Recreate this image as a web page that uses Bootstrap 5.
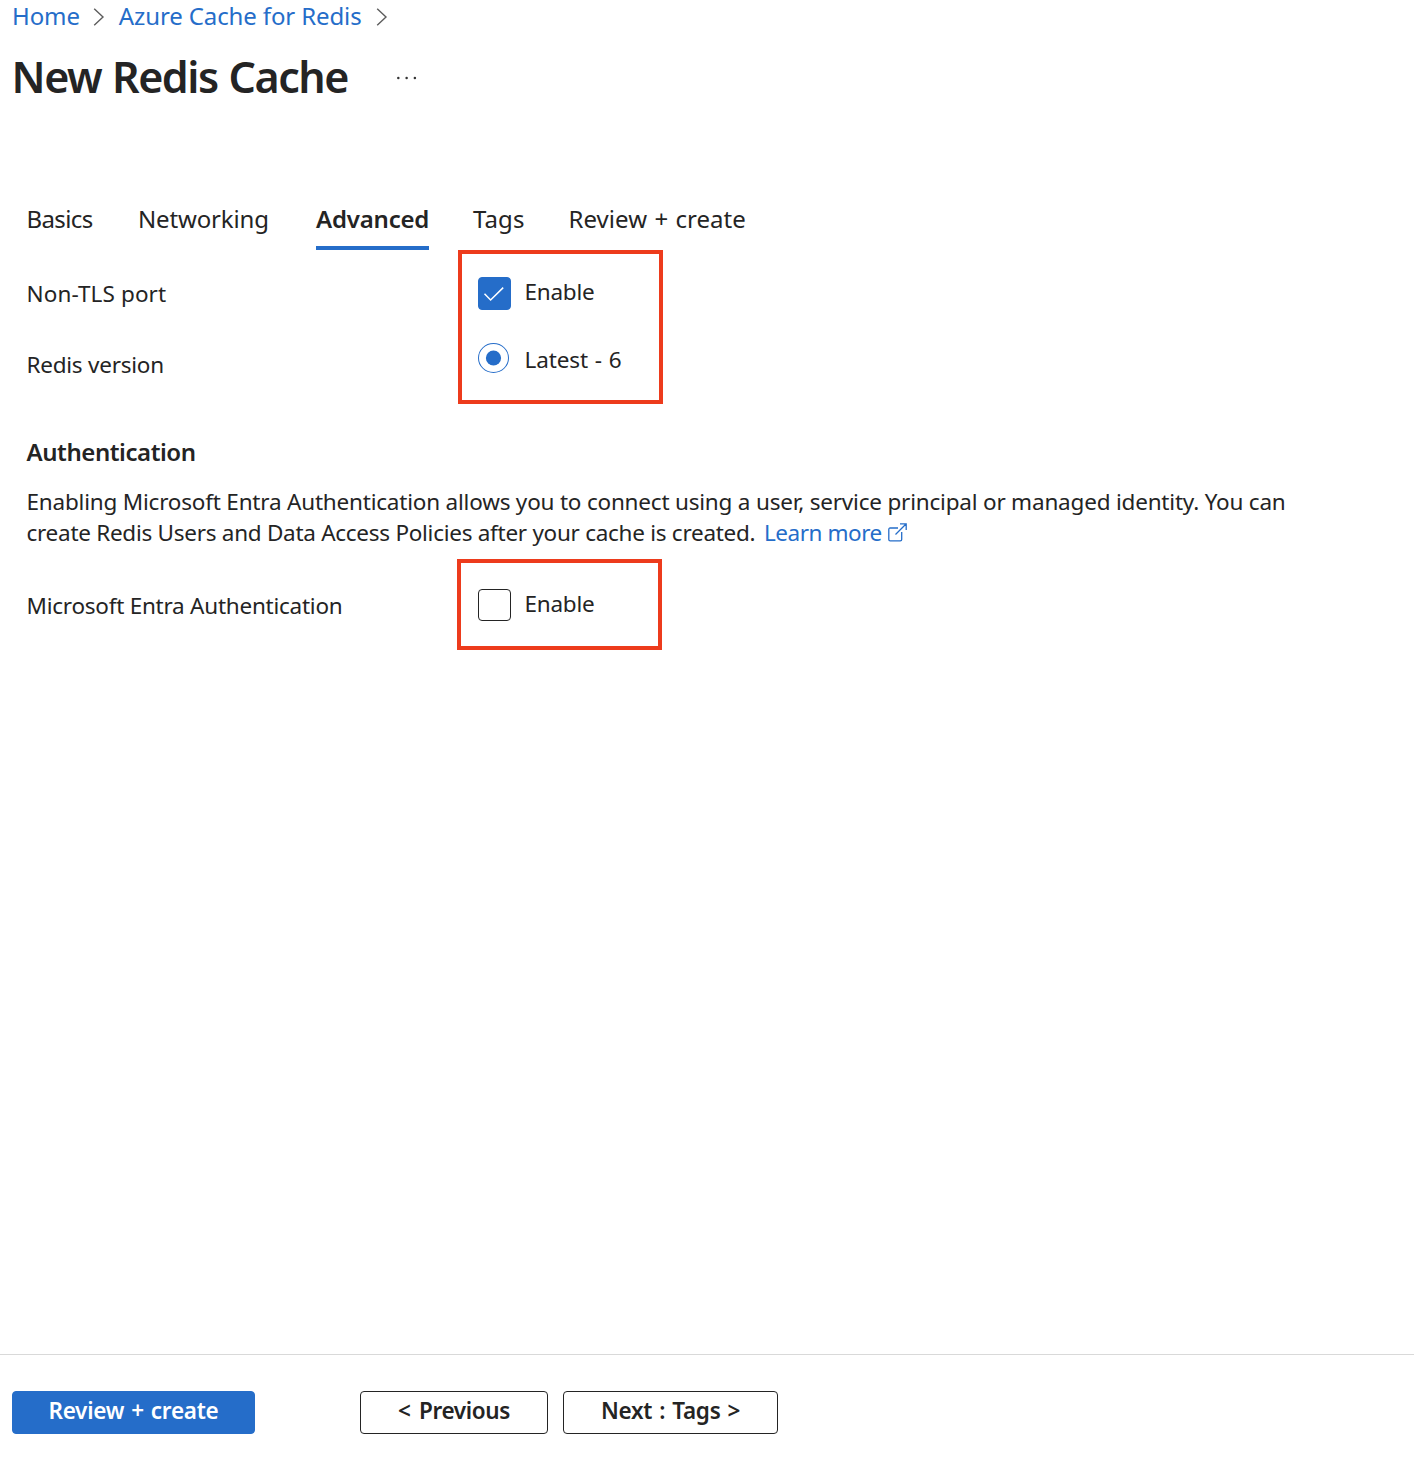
<!DOCTYPE html>
<html lang="en">
<head>
<meta charset="utf-8">
<meta name="viewport" content="width=device-width, initial-scale=1">
<title>New Redis Cache</title>
<link href="https://cdn.jsdelivr.net/npm/bootstrap@5.3.0/dist/css/bootstrap.min.css" rel="stylesheet">
<style>
body{font-family:"Noto Sans","Open Sans",sans-serif;color:#242424;font-size:22.5px;background:#fff;letter-spacing:-.24px}
a{color:#256dc9;text-decoration:none}
.page{height:1458px}
.crumbs{height:32px;line-height:32px;font-size:24px;padding-left:12px;letter-spacing:-.12px}
.crumbs svg{margin:2px 14px 0 13px}
.crumbs .sep-end{margin-left:14px}
.title-row{margin-top:15px;height:60px;padding-left:11.5px}
.title-row h1{font-size:43px;line-height:60px;font-weight:600;letter-spacing:-1.45px;word-spacing:1px}
.more-dots{margin-left:48px;margin-top:1px}
.step-tabs{margin-top:92px;padding-left:26.5px;height:51px}
.step-tabs .nav-link{padding:0;font-size:24px;line-height:40px;height:51px;color:#242424;letter-spacing:-.15px}
.step-tabs .nav-link.active{font-weight:600;border-bottom:4px solid #256dc9;letter-spacing:-.2px;width:113px;border-radius:0}
.step-tabs .tab-basics{width:111.5px;letter-spacing:-.6px}
.step-tabs .tab-net{width:178px}
.step-tabs .tab-tags{margin-left:44px;width:95.5px;letter-spacing:.1px}
.step-tabs .tab-review{letter-spacing:.05px;word-spacing:1px}
.labels{width:458px;padding-left:26.5px;line-height:40px}
.labels .tls-name{letter-spacing:.12px}
.label-stack{padding-top:24px;gap:31px}
.highlight{border:4px solid #ed3b1c;width:205px;padding-left:16px;line-height:40px}
.highlight-tall{height:154px;padding-top:18px;gap:28px}
.highlight-short{height:91px;margin-left:-1px;padding:21px 0 0 17px}
.highlight .form-check-input{width:33px;height:33px;margin:0;float:none;border-color:#242424;border-radius:4px;flex:none}
.highlight .form-check-input:checked{background-color:#256dc9;border-color:#256dc9}
.highlight .check-entra{height:32px;margin-top:5px}
.highlight .check-tls{background-image:url("data:image/svg+xml,<svg xmlns='http://www.w3.org/2000/svg' viewBox='0 0 33 33'><path d='M6.5 16.8l6.1 6.2L25.2 10.6' fill='none' stroke='white' stroke-width='1.5'/></svg>")!important;background-size:33px 33px;margin-top:5px}
.highlight .form-check-input[type=radio]{width:31px;height:30px;border-radius:50%;background-color:#fff;background-size:31px 31px;background-image:url("data:image/svg+xml,<svg xmlns='http://www.w3.org/2000/svg' viewBox='0 0 31 31'><circle cx='15.5' cy='15.5' r='7.6' fill='%23256dc9'/></svg>")!important;margin:3px 2px 0 0}
.highlight label{padding-left:13.5px}
.highlight .version-name{letter-spacing:-.1px;word-spacing:1px}
.section-title{font-size:24px;font-weight:600;line-height:40px;letter-spacing:-.43px;margin:28px 0 0;padding-left:26.5px}
.intro{line-height:31px;margin:14px 0 0;padding-left:26.5px;height:73px;letter-spacing:-.2px}
.intro .second{letter-spacing:-.27px}
.intro a{letter-spacing:-.45px;margin-left:3px}
.intro svg{margin:-4px 0 0 1px}
.entra-name{padding-top:27px}
.foot{height:104px;border-top:1px solid #d9d9d9;padding:36px 0 0 12px}
.foot .btn{height:43px;padding:0 0 3px;font-size:22.5px;font-weight:600;line-height:38px;border-radius:4px;color:#242424;border:1px solid #242424;background:#fff;letter-spacing:-.25px;word-spacing:1.4px}
.foot .btn-main{width:243px;margin-right:105px;background:#256dc9;border-color:#256dc9;color:#fff}
.foot .btn-prev{width:188px;margin-right:15px;word-spacing:3px;letter-spacing:-.35px}
.foot .btn-next{width:215px}
</style>
</head>
<body>
<div class="page d-flex flex-column">
  <nav class="crumbs d-flex align-items-center" aria-label="breadcrumb">
    <a href="#">Home</a>
    <svg width="12" height="20" viewBox="0 0 12 20" fill="none" stroke="#5c5c5c" stroke-width="1.4"><path d="M1.2 1.8 10 10 1.2 18.2"/></svg>
    <a href="#">Azure Cache for Redis</a>
    <svg class="sep-end" width="12" height="20" viewBox="0 0 12 20" fill="none" stroke="#5c5c5c" stroke-width="1.4"><path d="M1.2 1.8 10 10 1.2 18.2"/></svg>
  </nav>
  <header class="title-row d-flex align-items-center">
    <h1 class="m-0">New Redis Cache</h1>
    <svg class="more-dots" width="22" height="4" viewBox="0 0 22 4" fill="#333"><circle cx="2.3" cy="2" r="1.25"/><circle cx="10.6" cy="2" r="1.25"/><circle cx="18.9" cy="2" r="1.25"/></svg>
  </header>
  <ul class="nav step-tabs flex-nowrap">
    <li class="nav-item"><a class="nav-link tab-basics" href="#">Basics</a></li>
    <li class="nav-item"><a class="nav-link tab-net" href="#">Networking</a></li>
    <li class="nav-item"><a class="nav-link active" href="#">Advanced</a></li>
    <li class="nav-item"><a class="nav-link tab-tags" href="#">Tags</a></li>
    <li class="nav-item"><a class="nav-link tab-review" href="#">Review + create</a></li>
  </ul>
  <main class="flex-grow-1">
    <div class="d-flex">
      <div class="labels label-stack d-flex flex-column flex-shrink-0">
        <span class="tls-name">Non-TLS port</span>
        <span>Redis version</span>
      </div>
      <div class="highlight highlight-tall d-flex flex-column">
        <div class="d-flex"><input class="form-check-input check-tls" type="checkbox" id="tls" checked><label for="tls">Enable</label></div>
        <div class="d-flex"><input class="form-check-input" type="radio" id="ver" checked><label class="version-name" for="ver">Latest - 6</label></div>
      </div>
    </div>
    <h2 class="section-title">Authentication</h2>
    <p class="intro">Enabling Microsoft Entra Authentication allows you to connect using a user, service principal or managed identity. You can<br><span class="second">create Redis Users and Data Access Policies after your cache is created.</span> <a href="#">Learn more <svg width="19" height="19" viewBox="0 0 19 19" fill="none" stroke="#256dc9" stroke-width="1.3"><path d="M10 5H2.2Q.8 5 .8 6.400V16.500Q.8 17.900 2.200 17.900H12.300Q13.700 17.900 13.700 16.500V9M7.500 11.500 18 1M12 .8H18.200V7"/></svg></a></p>
    <div class="d-flex">
      <div class="labels entra-name flex-shrink-0">Microsoft Entra Authentication</div>
      <div class="highlight highlight-short">
        <div class="d-flex"><input class="form-check-input check-entra" type="checkbox" id="entra"><label for="entra">Enable</label></div>
      </div>
    </div>
  </main>
  <footer class="foot d-flex">
    <button class="btn btn-main" type="button">Review + create</button>
    <button class="btn btn-prev" type="button">&lt; Previous</button>
    <button class="btn btn-next" type="button">Next : Tags &gt;</button>
  </footer>
</div>
<script src="https://cdn.jsdelivr.net/npm/bootstrap@5.3.0/dist/js/bootstrap.bundle.min.js"></script>
</body>
</html>
